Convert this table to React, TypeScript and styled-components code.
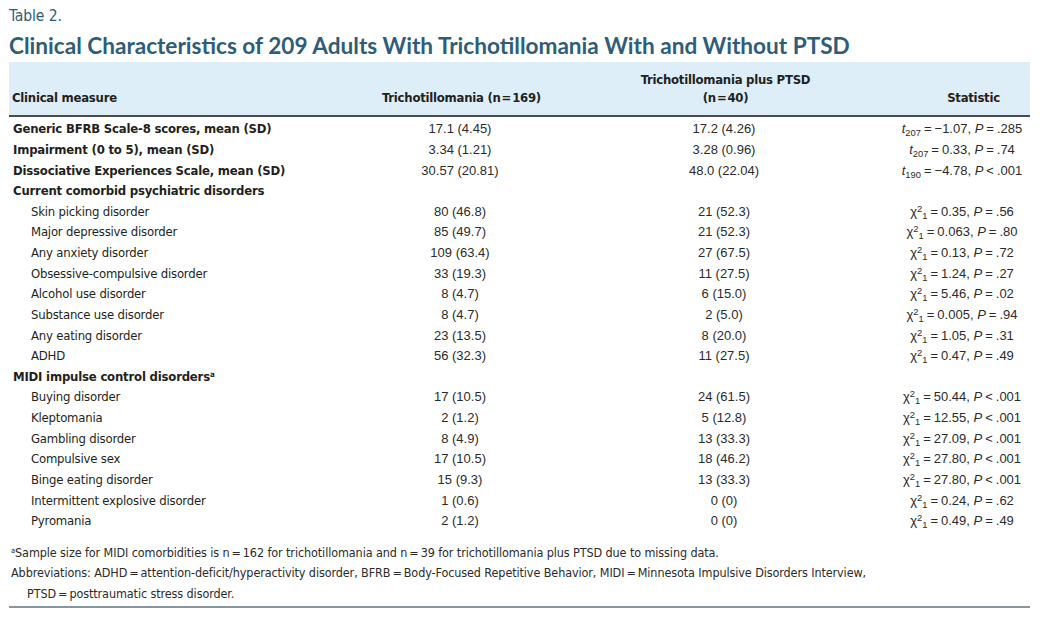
import React from 'react';
import styled, { createGlobalStyle } from 'styled-components';

const GlobalStyle = createGlobalStyle`
  html, body {
    margin: 0;
    padding: 0;
    background: #ffffff;
  }
`;

const condensed = `"Liberation Sans Narrow", "DejaVu Sans Condensed", "Arial Narrow", sans-serif`;
const plain = `"Liberation Sans", Arial, sans-serif`;

const Page = styled.div`
  width: 1021px;
  padding: 6px 0 0 9px;
  color: #231f20;
`;

const TableNumber = styled.div`
  font-family: ${condensed};
  font-stretch: condensed;
  font-size: 15.5px;
  line-height: 20px;
  letter-spacing: -0.1px;
  color: #2f5d78;
`;

const Title = styled.h1`
  margin: 6px 0 0;
  font-family: Lato, "Open Sans", sans-serif;
  font-weight: 700;
  font-size: 22.6px;
  line-height: 27px;
  color: #2f5d78;
`;

const Table = styled.table`
  margin-top: 3px;
  width: 1021px;
  border-collapse: collapse;
  table-layout: fixed;
`;

const HeadRow = styled.tr`
  background: #deeef8;
  border-bottom: 2px solid #4b4b4d;
`;

const HeadCell = styled.th<{ $align?: 'left' | 'center'; $shift?: number }>`
  height: 45px;
  padding: 0 0 8px ${p => (p.$shift ?? 0) + 3}px;
  vertical-align: bottom;
  text-align: ${p => p.$align ?? 'center'};
  font-family: ${condensed};
  font-stretch: condensed;
  font-weight: 700;
  font-size: 13px;
  line-height: 18px;
  letter-spacing: -0.25px;
  color: #231f20;
`;

const SpacerRow = styled.tr`
  height: 3px;
`;

const BodyRow = styled.tr`
  height: 20.63px;
`;

const LabelCell = styled.td<{ $group?: boolean }>`
  padding: 0 0 0 ${p => (p.$group ? 4 : 22)}px;
  font-family: ${condensed};
  font-stretch: condensed;
  font-weight: ${p => (p.$group ? 700 : 400)};
  font-size: 13px;
  line-height: 20px;
  letter-spacing: -0.2px;
  white-space: nowrap;
  color: #231f20;
`;

const ValueCell = styled.td<{ $shift?: number }>`
  padding: 0 0 0 ${p => p.$shift ?? 0}px;
  text-align: center;
  font-family: ${plain};
  font-size: 13px;
  line-height: 20px;
  white-space: nowrap;
  color: #2b2b2b;
`;

const Eq = styled.span<{ $gap?: number }>`
  margin: 0 ${p => p.$gap ?? 1}px;
`;

const Sup = styled.sup`
  font-size: 0.72em;
  line-height: 0;
  vertical-align: 0.45em;
`;

const Sub = styled.sub`
  font-size: 0.72em;
  line-height: 0;
  vertical-align: -0.3em;
`;

const Notes = styled.div`
  margin-top: 11px;
  padding: 0 0 2px 2px;
  border-bottom: 2px solid #8796a0;
  font-family: ${condensed};
  font-stretch: condensed;
  font-size: 12.5px;
  line-height: 20.6px;
  letter-spacing: -0.1px;
  color: #2b2b2b;
`;

const Note = styled.p<{ $hang?: boolean }>`
  margin: 0;
  padding-left: ${p => (p.$hang ? 16 : 0)}px;
  text-indent: ${p => (p.$hang ? -16 : 0)}px;
`;

const NoteMark = styled.sup`
  font-size: 0.6em;
  line-height: 0;
  vertical-align: 0.5em;
`;

type Stat = { chi: boolean; df: string; val: string; op: string; p: string };

type Row = {
  label: string;
  group?: boolean;
  mark?: boolean;
  a?: string;
  b?: string;
  stat?: Stat;
};

const t = (df: string, val: string, op: string, p: string): Stat => ({ chi: false, df, val, op, p });
const chi = (val: string, op: string, p: string): Stat => ({ chi: true, df: '1', val, op, p });

const rows: Row[] = [
  { label: 'Generic BFRB Scale-8 scores, mean (SD)', group: true, a: '17.1 (4.45)', b: '17.2 (4.26)', stat: t('207', '\u22121.07', '=', '.285') },
  { label: 'Impairment (0 to 5), mean (SD)', group: true, a: '3.34 (1.21)', b: '3.28 (0.96)', stat: t('207', '0.33', '=', '.74') },
  { label: 'Dissociative Experiences Scale, mean (SD)', group: true, a: '30.57 (20.81)', b: '48.0 (22.04)', stat: t('190', '\u22124.78', '<', '.001') },
  { label: 'Current comorbid psychiatric disorders', group: true },
  { label: 'Skin picking disorder', a: '80 (46.8)', b: '21 (52.3)', stat: chi('0.35', '=', '.56') },
  { label: 'Major depressive disorder', a: '85 (49.7)', b: '21 (52.3)', stat: chi('0.063', '=', '.80') },
  { label: 'Any anxiety disorder', a: '109 (63.4)', b: '27 (67.5)', stat: chi('0.13', '=', '.72') },
  { label: 'Obsessive-compulsive disorder', a: '33 (19.3)', b: '11 (27.5)', stat: chi('1.24', '=', '.27') },
  { label: 'Alcohol use disorder', a: '8 (4.7)', b: '6 (15.0)', stat: chi('5.46', '=', '.02') },
  { label: 'Substance use disorder', a: '8 (4.7)', b: '2 (5.0)', stat: chi('0.005', '=', '.94') },
  { label: 'Any eating disorder', a: '23 (13.5)', b: '8 (20.0)', stat: chi('1.05', '=', '.31') },
  { label: 'ADHD', a: '56 (32.3)', b: '11 (27.5)', stat: chi('0.47', '=', '.49') },
  { label: 'MIDI impulse control disorders', group: true, mark: true },
  { label: 'Buying disorder', a: '17 (10.5)', b: '24 (61.5)', stat: chi('50.44', '<', '.001') },
  { label: 'Kleptomania', a: '2 (1.2)', b: '5 (12.8)', stat: chi('12.55', '<', '.001') },
  { label: 'Gambling disorder', a: '8 (4.9)', b: '13 (33.3)', stat: chi('27.09', '<', '.001') },
  { label: 'Compulsive sex', a: '17 (10.5)', b: '18 (46.2)', stat: chi('27.80', '<', '.001') },
  { label: 'Binge eating disorder', a: '15 (9.3)', b: '13 (33.3)', stat: chi('27.80', '<', '.001') },
  { label: 'Intermittent explosive disorder', a: '1 (0.6)', b: '0 (0)', stat: chi('0.24', '=', '.62') },
  { label: 'Pyromania', a: '2 (1.2)', b: '0 (0)', stat: chi('0.49', '=', '.49') },
];

const StatText: React.FC<{ s: Stat }> = ({ s }) => (
  <>
    {s.chi ? (
      <>
        {'\u03C7'}
        <Sup>2</Sup>
        <Sub>{s.df}</Sub>
      </>
    ) : (
      <>
        <i>t</i>
        <Sub>{s.df}</Sub>
      </>
    )}
    <Eq $gap={3}>=</Eq>
    {s.val}, <i>P</i>
    <Eq $gap={3}>{s.op}</Eq>
    {s.p}
  </>
);

const App: React.FC = () => (
  <>
    <GlobalStyle />
    <Page>
      <TableNumber>Table 2.</TableNumber>
      <Title>Clinical Characteristics of 209 Adults With Trichotillomania With and Without PTSD</Title>
      <Table>
        <colgroup>
          <col style={{ width: 351 }} />
          <col style={{ width: 200 }} />
          <col style={{ width: 328 }} />
          <col style={{ width: 142 }} />
        </colgroup>
        <thead>
          <HeadRow>
            <HeadCell $align="left">Clinical measure</HeadCell>
            <HeadCell>
              Trichotillomania (n<Eq>=</Eq>169)
            </HeadCell>
            <HeadCell>
              Trichotillomania plus PTSD
              <br />
              (n<Eq>=</Eq>40)
            </HeadCell>
            <HeadCell $shift={26}>Statistic</HeadCell>
          </HeadRow>
        </thead>
        <tbody>
          <SpacerRow />
          {rows.map((r, i) => (
            <BodyRow key={i}>
              <LabelCell $group={r.group}>
                {r.label}
                {r.mark && <NoteMark>a</NoteMark>}
              </LabelCell>
              <ValueCell>{r.a}</ValueCell>
              <ValueCell>{r.b}</ValueCell>
              <ValueCell $shift={6}>{r.stat && <StatText s={r.stat} />}</ValueCell>
            </BodyRow>
          ))}
        </tbody>
      </Table>
      <Notes>
        <Note>
          <NoteMark>a</NoteMark>Sample size for MIDI comorbidities is n<Eq $gap={2}>=</Eq>162 for trichotillomania and n
          <Eq $gap={2}>=</Eq>39 for trichotillomania plus PTSD due to missing data.
        </Note>
        <Note $hang>
          Abbreviations: ADHD<Eq $gap={2}>=</Eq>attention-deficit/hyperactivity disorder, BFRB<Eq $gap={2}>=</Eq>
          Body-Focused Repetitive Behavior, MIDI<Eq $gap={2}>=</Eq>Minnesota Impulsive Disorders Interview,
          <br />
          PTSD<Eq $gap={2}>=</Eq>posttraumatic stress disorder.
        </Note>
      </Notes>
    </Page>
  </>
);

export default App;
